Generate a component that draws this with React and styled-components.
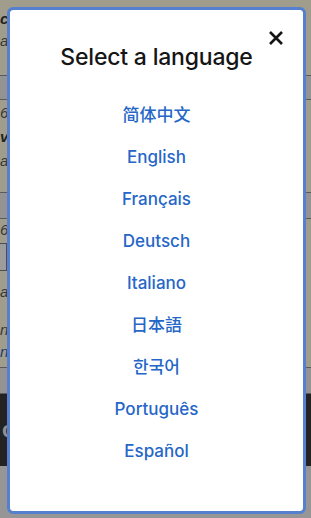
import React from 'react';
import styled, { createGlobalStyle } from 'styled-components';

const Global = createGlobalStyle`
  html, body { margin: 0; padding: 0; }
  body {
    font-family: "Liberation Sans", Arial, sans-serif;
    background: #e6e6e6;
    overflow: hidden;
  }
`;

const Page = styled.div`
  display: flex;
  flex-direction: column;
  width: 311px;
  height: 518px;
  background: #e6e6e6;
`;

const Card = styled.section`
  display: flex;
  flex-direction: column;
  gap: ${(p) => p.$gap || 6}px;
  height: ${(p) => p.$h}px;
  padding-top: ${(p) => p.$pt || 8}px;
  box-sizing: border-box;
  background: #f6f2d7;
  border-bottom: 1px solid #8a8a8a;
`;

const Band = styled.div`
  height: ${(p) => p.$h}px;
  background: #e2e2e2;
  border-bottom: 1px solid #8a8a8a;
  box-sizing: border-box;
`;

const Line = styled.div`
  font-size: 15px;
  line-height: 18px;
  font-style: italic;
  font-weight: ${(p) => (p.$bold ? 700 : 400)};
  color: ${(p) => (p.$link ? '#2a5fb0' : p.$bold ? '#333' : '#555')};
  white-space: nowrap;
  margin-top: ${(p) => p.$mt || 0}px;
`;

const SmallBox = styled.div`
  width: 6px;
  height: 26px;
  border: 1px solid #777;
  border-left: none;
  background: #f0f0f0;
`;

const Footer = styled.footer`
  height: 72px;
  background: #363636;
  display: flex;
  align-items: center;
  padding-left: 2px;
  font-size: 22px;
  font-weight: 700;
  color: #ddd;
`;

const Overlay = styled.div`
  position: fixed;
  inset: 0;
  background: rgba(0, 0, 0, 0.35);
  display: flex;
  padding: 10px 8px 7px 10px;
`;

const Dialog = styled.div`
  position: relative;
  flex: 1;
  background: #fff;
  border-radius: 3px;
  outline: 3px solid #5580cf;
  display: flex;
  flex-direction: column;
  align-items: center;
  padding-top: 32px;
  font-family: "Inter", "Noto Sans", "Noto Sans CJK SC", sans-serif;
`;

const Title = styled.h1`
  margin: 0;
  font-size: 23px;
  line-height: 30px;
  font-weight: 500;
  color: #151515;
  letter-spacing: -0.2px;
`;

const Close = styled.button`
  position: absolute;
  top: 17px;
  right: 16px;
  width: 22px;
  height: 22px;
  padding: 0;
  border: none;
  background: none;
  display: flex;
  align-items: center;
  justify-content: center;
`;

const List = styled.ul`
  list-style: none;
  margin: 22px 0 0;
  padding: 0;
  display: flex;
  flex-direction: column;
  align-items: center;
`;

const Lang = styled.li`
  height: 42px;
  line-height: 42px;
  font-size: 17px;
  font-weight: 500;
  color: #2566c7;
  font-family: "Inter", "Noto Sans CJK SC", "Noto Sans CJK JP", "Noto Sans CJK KR", sans-serif;
`;

const langs = ['简体中文', 'English', 'Français', 'Deutsch', 'Italiano', '日本語', '한국어', 'Português', 'Español'];

export default function App() {
  return (
    <>
      <Global />
      <Page>
        <Card $h={76} $pt={10} $gap={4}>
          <Line $bold>c</Line>
          <Line>ate</Line>
        </Card>
        <Band $h={24} />
        <Card $h={93} $pt={4} $gap={6}>
          <Line>6</Line>
          <Line $bold>vi</Line>
          <Line>ate</Line>
        </Card>
        <Band $h={26} />
        <Card $h={149} $pt={2} $gap={4}>
          <Line>6</Line>
          <SmallBox />
          <Line $mt={8}>a</Line>
          <Line $mt={16}>nt</Line>
          <Line $link>np</Line>
        </Card>
        <Band $h={26} />
        <Footer>c</Footer>
      </Page>
      <Overlay>
        <Dialog role="dialog" aria-label="Select a language">
          <Close aria-label="Close">
            <svg width="16" height="16" viewBox="0 0 16 16">
              <path d="M2 2 L14 14 M14 2 L2 14" stroke="#151515" strokeWidth="2.6" strokeLinecap="butt" />
            </svg>
          </Close>
          <Title>Select a language</Title>
          <List>
            {langs.map((l) => (
              <Lang key={l}>{l}</Lang>
            ))}
          </List>
        </Dialog>
      </Overlay>
    </>
  );
}
